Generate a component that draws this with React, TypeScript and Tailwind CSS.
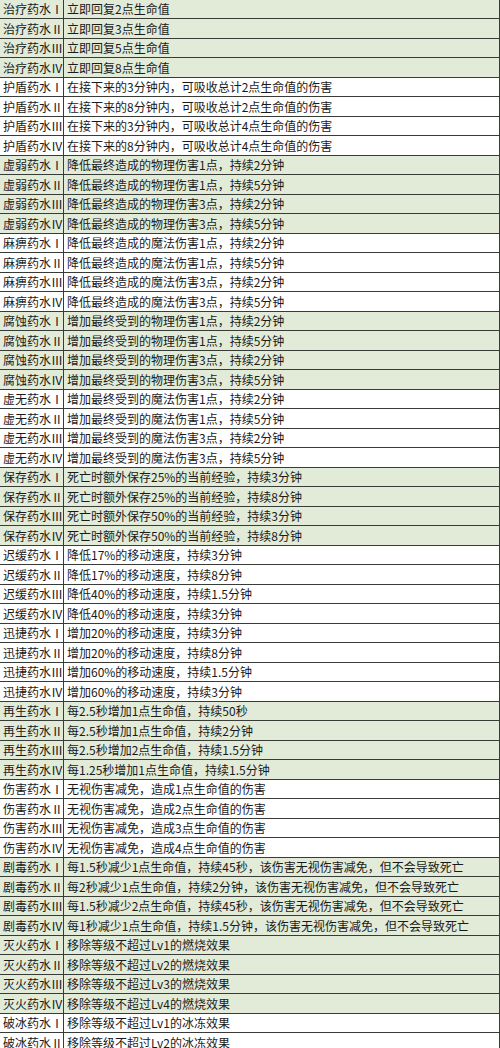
import React from "react";

type Group = { name: string; green: boolean; rows: string[] };

const N = ["Ⅰ", "Ⅱ", "Ⅲ", "Ⅳ"];
const C = "，";

const groups: Group[] = [
  { name: "治疗药水", green: true, rows: ["立即回复2点生命值", "立即回复3点生命值", "立即回复5点生命值", "立即回复8点生命值"] },
  {
    name: "护盾药水",
    green: false,
    rows: [
      `在接下来的3分钟内${C}可吸收总计2点生命值的伤害`,
      `在接下来的8分钟内${C}可吸收总计2点生命值的伤害`,
      `在接下来的3分钟内${C}可吸收总计4点生命值的伤害`,
      `在接下来的8分钟内${C}可吸收总计4点生命值的伤害`,
    ],
  },
  {
    name: "虚弱药水",
    green: true,
    rows: [
      `降低最终造成的物理伤害1点${C}持续2分钟`,
      `降低最终造成的物理伤害1点${C}持续5分钟`,
      `降低最终造成的物理伤害3点${C}持续2分钟`,
      `降低最终造成的物理伤害3点${C}持续5分钟`,
    ],
  },
  {
    name: "麻痹药水",
    green: false,
    rows: [
      `降低最终造成的魔法伤害1点${C}持续2分钟`,
      `降低最终造成的魔法伤害1点${C}持续5分钟`,
      `降低最终造成的魔法伤害3点${C}持续2分钟`,
      `降低最终造成的魔法伤害3点${C}持续5分钟`,
    ],
  },
  {
    name: "腐蚀药水",
    green: true,
    rows: [
      `增加最终受到的物理伤害1点${C}持续2分钟`,
      `增加最终受到的物理伤害1点${C}持续5分钟`,
      `增加最终受到的物理伤害3点${C}持续2分钟`,
      `增加最终受到的物理伤害3点${C}持续5分钟`,
    ],
  },
  {
    name: "虚无药水",
    green: false,
    rows: [
      `增加最终受到的魔法伤害1点${C}持续2分钟`,
      `增加最终受到的魔法伤害1点${C}持续5分钟`,
      `增加最终受到的魔法伤害3点${C}持续2分钟`,
      `增加最终受到的魔法伤害3点${C}持续5分钟`,
    ],
  },
  {
    name: "保存药水",
    green: true,
    rows: [
      `死亡时额外保存25%的当前经验${C}持续3分钟`,
      `死亡时额外保存25%的当前经验${C}持续8分钟`,
      `死亡时额外保存50%的当前经验${C}持续3分钟`,
      `死亡时额外保存50%的当前经验${C}持续8分钟`,
    ],
  },
  {
    name: "迟缓药水",
    green: false,
    rows: [
      `降低17%的移动速度${C}持续3分钟`,
      `降低17%的移动速度${C}持续8分钟`,
      `降低40%的移动速度${C}持续1.5分钟`,
      `降低40%的移动速度${C}持续3分钟`,
    ],
  },
  {
    name: "迅捷药水",
    green: false,
    rows: [
      `增加20%的移动速度${C}持续3分钟`,
      `增加20%的移动速度${C}持续8分钟`,
      `增加60%的移动速度${C}持续1.5分钟`,
      `增加60%的移动速度${C}持续3分钟`,
    ],
  },
  {
    name: "再生药水",
    green: true,
    rows: [
      `每2.5秒增加1点生命值${C}持续50秒`,
      `每2.5秒增加1点生命值${C}持续2分钟`,
      `每2.5秒增加2点生命值${C}持续1.5分钟`,
      `每1.25秒增加1点生命值${C}持续1.5分钟`,
    ],
  },
  {
    name: "伤害药水",
    green: false,
    rows: [
      `无视伤害减免${C}造成1点生命值的伤害`,
      `无视伤害减免${C}造成2点生命值的伤害`,
      `无视伤害减免${C}造成3点生命值的伤害`,
      `无视伤害减免${C}造成4点生命值的伤害`,
    ],
  },
  {
    name: "剧毒药水",
    green: true,
    rows: [
      `每1.5秒减少1点生命值${C}持续45秒${C}该伤害无视伤害减免${C}但不会导致死亡`,
      `每2秒减少1点生命值${C}持续2分钟${C}该伤害无视伤害减免${C}但不会导致死亡`,
      `每1.5秒减少2点生命值${C}持续45秒${C}该伤害无视伤害减免${C}但不会导致死亡`,
      `每1秒减少1点生命值${C}持续1.5分钟${C}该伤害无视伤害减免${C}但不会导致死亡`,
    ],
  },
  {
    name: "灭火药水",
    green: true,
    rows: [
      "移除等级不超过Lv1的燃烧效果",
      "移除等级不超过Lv2的燃烧效果",
      "移除等级不超过Lv3的燃烧效果",
      "移除等级不超过Lv4的燃烧效果",
    ],
  },
  {
    name: "破冰药水",
    green: false,
    rows: ["移除等级不超过Lv1的冰冻效果", "移除等级不超过Lv2的冰冻效果"],
  },
];

export default function App() {
  let idx = 0;
  const rows: React.ReactNode[] = [];
  groups.forEach((g) => {
    g.rows.forEach((desc, i) => {
      const k = idx++;
      const h = k % 2 === 0 ? "h-[19px]" : "h-[20px]";
      const bg = g.green ? "bg-[#e2ebd8]" : "bg-white";
      rows.push(
        <div key={k} className={`flex ${h} ${bg} border-b border-[#383b36]`}>
          <div className="w-[64px] shrink-0 border-r border-[#383b36] pl-[3px] flex items-center whitespace-nowrap overflow-hidden">
            {g.name}
            {N[i]}
          </div>
          <div className="flex-1 pl-[3px] flex items-center whitespace-nowrap overflow-hidden border-r border-[#383b36]">
            {desc}
          </div>
        </div>
      );
    });
  });
  return (
    <div
      className="w-[500px] h-[1048px] overflow-hidden bg-white text-[12px] leading-none text-[#1a1a1a]"
      style={{ fontFamily: '"Noto Sans CJK SC", "Noto Sans", sans-serif' }}
    >
      {rows}
    </div>
  );
}
